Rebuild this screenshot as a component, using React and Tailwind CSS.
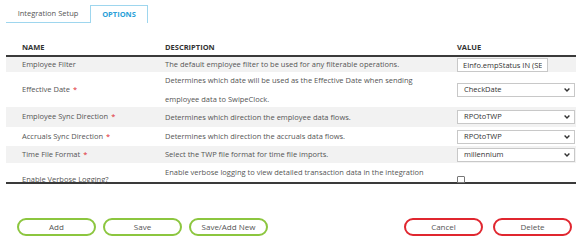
import { useState } from "react";

const Chevron = () => (
    <svg width="6" height="4" viewBox="0 0 6 4" className="shrink-0">
        <path d="M0.6 0.6 L3 3 L5.4 0.6" fill="none" stroke="#333" strokeWidth="1.4" />
    </svg>
);

const Req = () => <span className="text-[#e0262f] ml-[3px]">*</span>;

const FakeSelect = ({ value }) => (
    <div className="w-[118px] h-[14px] border border-[#c8c8c8] bg-white flex items-center justify-between pl-[6px] pr-[4px] text-[#333]">
        <span>{value}</span>
        <Chevron />
    </div>
);

const rows = [
    {
        name: "Employee Filter",
        desc: "The default employee filter to be used for any filterable operations.",
        h: "h-[15px]",
        bg: "bg-[#f2f2f2]",
        value: "input",
    },
    {
        name: "Effective Date",
        req: true,
        desc: "Determines which date will be used as the Effective Date when sending employee data to SwipeClock.",
        h: "h-[35px]",
        bg: "bg-white",
        value: "CheckDate",
    },
    {
        name: "Employee Sync Direction",
        req: true,
        desc: "Determines which direction the employee data flows.",
        h: "h-[20px]",
        bg: "bg-[#f2f2f2]",
        value: "RPOtoTWP",
    },
    {
        name: "Accruals Sync Direction",
        req: true,
        desc: "Determines which direction the accruals data flows.",
        h: "h-[19px]",
        bg: "bg-white",
        value: "RPOtoTWP",
    },
    {
        name: "Time File Format",
        req: true,
        desc: "Select the TWP file format for time file imports.",
        h: "h-[17px]",
        bg: "bg-[#f2f2f2]",
        value: "millennium",
    },
];

export default function App() {
    const [filter, setFilter] = useState("EInfo.empStatus IN (SELECT");
    const [verbose, setVerbose] = useState(false);

    return (
        <div className="w-[576px] h-[245px] bg-white overflow-hidden text-[7.5px] text-[#555] font-['Open_Sans',sans-serif]">
            {/* Tabs */}
            <div className="flex items-end pt-[5px] pl-[6px]">
                <div className="w-[84px] h-[17px] border-b border-[#9ed6ee] flex items-center justify-center text-[#555]">
                    Integration Setup
                </div>
                <div className="w-[58px] h-[18px] border-t border-l border-r border-[#9ed6ee] flex items-center justify-center font-bold text-[#2a9fd8]">
                    OPTIONS
                </div>
            </div>

            {/* Table */}
            <div className="ml-[6px] mt-[18px]">
                <div className="flex h-[16px] items-center border-b-2 border-[#3a3a3a] font-bold text-[#333]">
                    <div className="w-[159px] pl-[16px]">NAME</div>
                    <div className="w-[292px]">DESCRIPTION</div>
                    <div className="flex-1">VALUE</div>
                </div>

                {rows.map((r) => (
                    <div key={r.name} className={`flex items-center ${r.h} ${r.bg}`}>
                        <div className="w-[159px] pl-[16px]">
                            {r.name}
                            {r.req && <Req />}
                        </div>
                        <div className="w-[292px] pr-[20px] leading-[19px]">{r.desc}</div>
                        <div className="flex-1">
                            {r.value === "input" ? (
                                <input
                                    value={filter}
                                    onChange={(e) => setFilter(e.target.value)}
                                    className="w-[91px] h-[14px] border border-[#c8c8c8] bg-white px-[5px] text-[#333] outline-none"
                                />
                            ) : (
                                <FakeSelect value={r.value} />
                            )}
                        </div>
                    </div>
                ))}

                <div className="flex h-[21px] border-b-2 border-[#3a3a3a] bg-white">
                    <div className="w-[159px] pl-[16px] self-end leading-[8px] -mb-[1px]">Enable Verbose Logging?</div>
                    <div className="w-[292px] leading-[19px] pr-[20px]">
                        Enable verbose logging to view detailed transaction data in the integration
                    </div>
                    <div className="flex-1 self-end -mb-[1px]">
                        <button
                            onClick={() => setVerbose(!verbose)}
                            className="block w-[8px] h-[7px] border border-[#777] rounded-[1px] bg-white"
                        />
                    </div>
                </div>
            </div>

            {/* Buttons */}
            <div className="flex justify-between mt-[34px] pl-[17px] pr-[4px] text-[8px]">
                <div className="flex gap-[7px]">
                    <button className="w-[79px] h-[18px] rounded-full border-2 border-[#8cc63f] bg-white text-[#555]">Add</button>
                    <button className="w-[79px] h-[18px] rounded-full border-2 border-[#8cc63f] bg-white text-[#555]">Save</button>
                    <button className="w-[79px] h-[18px] rounded-full border-2 border-[#8cc63f] bg-white text-[#555]">Save/Add New</button>
                </div>
                <div className="flex gap-[10px]">
                    <button className="w-[79px] h-[18px] rounded-full border-2 border-[#e0262f] bg-white text-[#555]">Cancel</button>
                    <button className="w-[79px] h-[18px] rounded-full border-2 border-[#e0262f] bg-white text-[#555]">Delete</button>
                </div>
            </div>
        </div>
    );
}
